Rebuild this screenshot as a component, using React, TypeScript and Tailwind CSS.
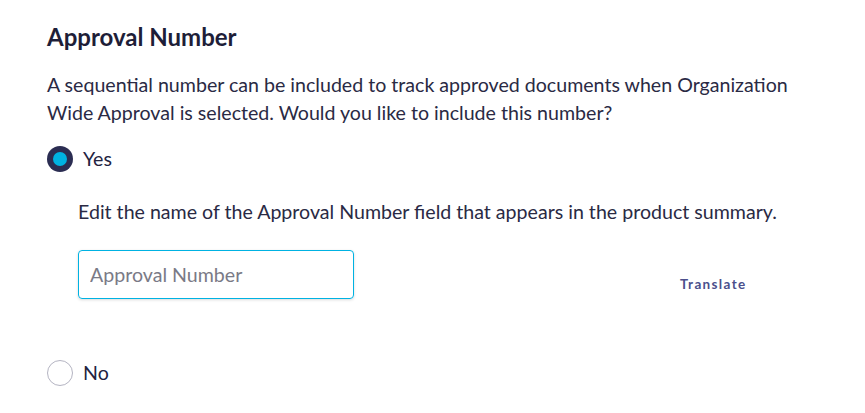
export default function App() {
  return (
    <div className="min-h-screen bg-white font-['Lato',sans-serif] text-[#23233f]">
      <div className="px-[47px] pt-[21px]">
        <h2 className="text-[24px] font-bold leading-[32px] text-[#1e1e38]">Approval Number</h2>
        <p className="mt-[18px] text-[19.6px] leading-[28px] text-[#2a2a44]">
          A sequential number can be included to track approved documents when Organization
          <br />
          Wide Approval is selected. Would you like to include this number?
        </p>

        <label className="mt-[18px] flex items-center gap-[10px]">
          <span className="flex h-[26px] w-[26px] items-center justify-center rounded-full bg-[#2b2d52]">
            <span className="h-[14px] w-[14px] rounded-full bg-[#00b2e2]" />
          </span>
          <span className="text-[19.6px] leading-[28px]">Yes</span>
        </label>

        <div className="pl-[31px]">
          <p className="mt-[25px] text-[19.6px] leading-[28px] text-[#2a2a44]">
            Edit the name of the Approval Number field that appears in the product summary.
          </p>
          <div className="mt-[24px] flex items-center">
            <input
              type="text"
              placeholder="Approval Number"
              className="h-[49px] w-[276px] rounded-[4px] border border-[#00b2e2] px-[11px] text-[19.6px] shadow-[0_1px_3px_rgba(0,0,0,0.15)] outline-none placeholder:text-[#7a7a86]"
            />
            <button className="ml-[326px] mt-[20px] text-[13.5px] font-bold tracking-[0.1em] text-[#4b4f8c]">
              Translate
            </button>
          </div>
        </div>

        <label className="mt-[60px] flex items-center gap-[10px]">
          <span className="h-[26px] w-[26px] rounded-full border border-[#b4b4c2] bg-white" />
          <span className="text-[19.6px] leading-[28px]">No</span>
        </label>
      </div>
    </div>
  );
}
